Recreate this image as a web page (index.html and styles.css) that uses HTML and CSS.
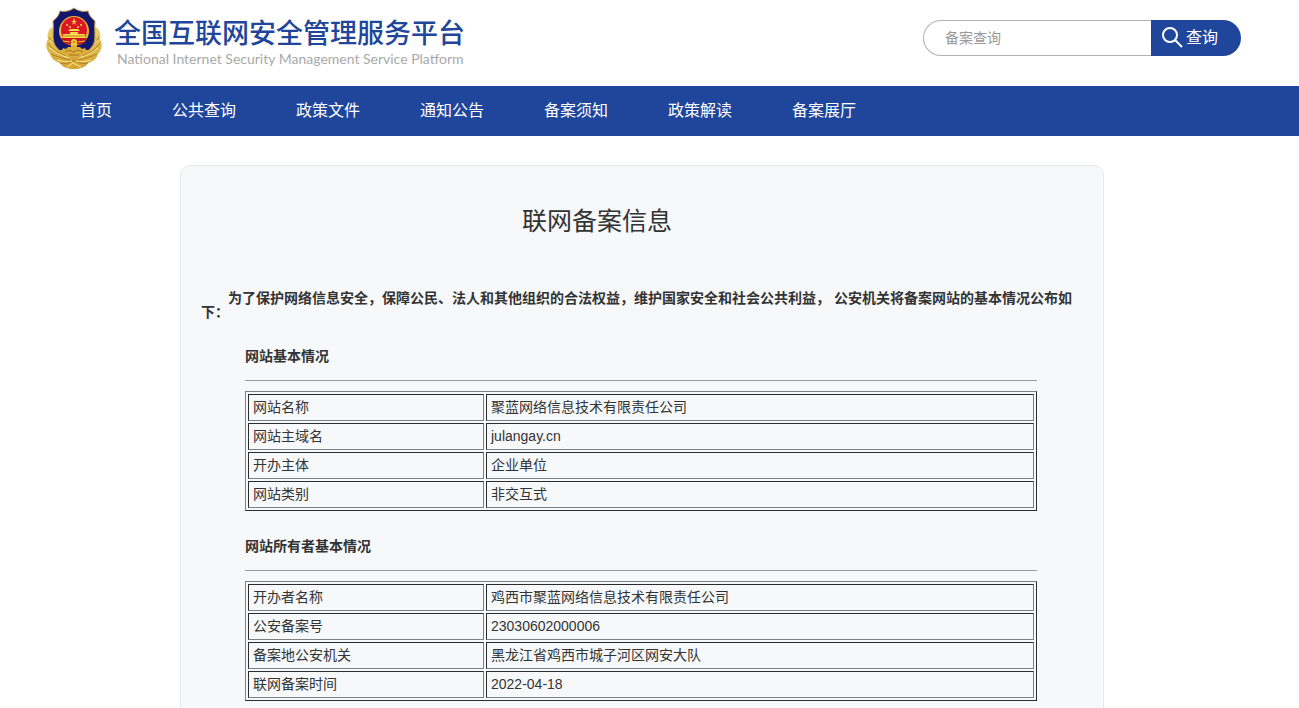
FILE: index.html
```html
<!DOCTYPE html>
<html lang="zh-CN">
<head>
<meta charset="utf-8">
<meta name="viewport" content="width=device-width, initial-scale=1">
<title>全国互联网安全管理服务平台</title>
<link rel="stylesheet" href="styles.css">
</head>
<body>
<header class="header">
  <div class="brand">
    <svg class="emblem" viewBox="0 0 58 63" aria-hidden="true">
      <defs>
        <linearGradient id="gold" x1="0" y1="0" x2="0" y2="1">
          <stop offset="0" stop-color="#ecd06a"/>
          <stop offset="1" stop-color="#d3a232"/>
        </linearGradient>
      </defs>
      <path d="M7 20C3 23 2 28 3 32C0 37 1 43 5 47C6 51 9 54 15 56C17 60 23 62 29 62C35 62 41 60 43 56C49 54 52 51 53 47C57 43 58 37 55 32C56 28 55 23 51 20L29 40Z" fill="url(#gold)"/>
      <path d="M4 30C7 35 10 40 17 44M3 36C7 42 13 46 20 49M6 47C12 50 18 51 25 53M15 56C20 57 24 56 29 53M54 30C51 35 48 40 41 44M55 36C51 42 45 46 38 49M52 47C46 50 40 51 33 53M43 56C38 57 34 56 29 53" fill="none" stroke="#b07d20" stroke-width="1"/>
      <path d="M5 33C10 39 14 43 21 47M5 41C11 46 17 49 24 51M53 33C48 39 44 43 37 47M53 41C47 46 41 49 34 51M12 53C18 55 22 55 27 54M46 53C40 55 36 55 31 54M22 60L28 56L36 60" fill="none" stroke="#fbe98b" stroke-width="1"/>
      <path d="M29 1C25 4 20 5 15 4C14 8 12 11 8 14C9 22 7 30 9 36C12 44 22 48 29 52C36 48 46 44 49 36C51 30 49 22 50 14C46 11 44 8 43 4C38 5 33 4 29 1Z" fill="#14166c" stroke="#b99a4c" stroke-width="1"/>
      <path d="M14 43L17 43L18 41L21 42L23 40H26V38H32V40H35L37 42L40 41L41 43L44 43L40 47L29 52L18 47Z" fill="#dcae3b"/>
      <path d="M20 45L24 43L28 45L33 43L38 45M24 48H34" fill="none" stroke="#a9741c" stroke-width="1"/>
      <circle cx="29" cy="24" r="15" fill="#e9b93c"/>
      <circle cx="29" cy="23" r="13" fill="#dc1622"/>
      <path d="M29 11L30 14H32L30 15L31 18L29 16L27 18L28 15L26 14H28Z" fill="#f8d84c"/>
      <g fill="#f8d84c">
        <circle cx="22" cy="18" r="1"/><circle cx="36" cy="18" r="1"/>
        <circle cx="25" cy="20" r="1"/><circle cx="33" cy="20" r="1"/>
        <path d="M23 24L25 22H33L35 24ZM25 25H33V27H40V31H18V27H25Z"/>
      </g>
      <path d="M18 29H40" stroke="#c4831c" stroke-width="1"/>
      <path d="M16 31H42L39 36L33 38L31 35H27L25 38L19 36Z" fill="#c8141c"/>
      <path d="M18 34L25 35M33 35L40 34" stroke="#f0c744" stroke-width="1"/>
      <circle cx="29" cy="35" r="3" fill="#f0c744"/>
      <circle cx="29" cy="35" r="1" fill="#b37918"/>
    </svg>
    <div class="brand-text">
      <div class="brand-name">全国互联网安全管理服务平台</div>
      <div class="brand-sub">National Internet Security Management Service Platform</div>
    </div>
  </div>
  <form class="search">
    <input class="search-input" type="text" placeholder="备案查询" aria-label="备案查询">
    <button class="search-button" type="button">
      <svg class="search-icon" viewBox="0 0 22 22" aria-hidden="true"><circle cx="8" cy="8" r="7"/><path d="M13 13L20 20"/></svg>
      查询
    </button>
  </form>
</header>
<nav class="nav">
  <a href="#">首页</a>
  <a href="#">公共查询</a>
  <a href="#">政策文件</a>
  <a href="#">通知公告</a>
  <a href="#">备案须知</a>
  <a href="#">政策解读</a>
  <a href="#">备案展厅</a>
</nav>
<main class="card">
  <h1 class="title">联网备案信息</h1>
  <p class="intro">为了保护网络信息安全，保障公民、法人和其他组织的合法权益，维护国家安全和社会公共利益， 公安机关将备案网站的基本情况公布如下：</p>
  <section class="block">
    <h2 class="block-title" id="site">网站基本情况</h2>
    <table class="info" aria-labelledby="site">
      <tr><th scope="row">网站名称</th><td>聚蓝网络信息技术有限责任公司</td></tr>
      <tr><th scope="row">网站主域名</th><td>julangay.cn</td></tr>
      <tr><th scope="row">开办主体</th><td>企业单位</td></tr>
      <tr><th scope="row">网站类别</th><td>非交互式</td></tr>
    </table>
  </section>
  <section class="block">
    <h2 class="block-title" id="owner">网站所有者基本情况</h2>
    <table class="info" aria-labelledby="owner">
      <tr><th scope="row">开办者名称</th><td>鸡西市聚蓝网络信息技术有限责任公司</td></tr>
      <tr><th scope="row">公安备案号</th><td>23030602000006</td></tr>
      <tr><th scope="row">备案地公安机关</th><td>黑龙江省鸡西市城子河区网安大队</td></tr>
      <tr><th scope="row">联网备案时间</th><td>2022-04-18</td></tr>
    </table>
  </section>
</main>
</body>
</html>
```
FILE: styles.css
```css
* { box-sizing: border-box; }
html { overflow-y: hidden; }
body {
  margin: 0;
  background: #fff;
  color: #333;
  font: 14px/14px "Liberation Sans", "Noto Sans CJK SC", sans-serif;
}
.header {
  display: flex;
  justify-content: space-between;
  align-items: flex-start;
  height: 86px;
  padding: 0 58px 0 45px;
}
.brand { display: flex; gap: 11px; padding-top: 7px; }
.emblem { width: 58px; height: 63px; }
.brand-text { padding-top: 7px; white-space: nowrap; }
.brand-name {
  color: #1f469b;
  font-size: 27px;
  font-weight: 500;
  line-height: 35px;
  font-family: "Noto Sans CJK SC", sans-serif;
}
.brand-sub {
  padding-left: 3px;
  color: #a9a9a9;
  font: 14px/20px Lato, sans-serif;
}
.search { display: flex; width: 318px; height: 36px; margin-top: 20px; }
.search-input {
  flex: 1;
  min-width: 0;
  padding: 0 21px;
  border: 1px solid #b2b2b2;
  border-right: 0;
  border-radius: 18px 0 0 18px;
  background: #fff;
  font: inherit;
}
.search-input::placeholder { color: #999; }
.search-button {
  display: flex;
  align-items: center;
  gap: 2px;
  width: 90px;
  padding: 0 0 0 11px;
  border: 0;
  border-radius: 0 18px 18px 0;
  background: #1f469b;
  color: #fff;
  font: 16px/20px "Liberation Sans", "Noto Sans CJK SC", sans-serif;
}
.search-icon { width: 22px; height: 22px; fill: none; stroke: #fff; stroke-width: 2; }
.nav {
  display: flex;
  gap: 60px;
  height: 50px;
  padding: 0 80px;
  background: #1f469b;
}
.nav a {
  color: #fff;
  font-size: 16px;
  line-height: 50px;
  text-decoration: none;
  white-space: nowrap;
}
.card {
  margin: 29px 195px 0 180px;
  padding: 37px 20px 40px;
  border: 1px solid #e8e9eb;
  border-radius: 10px;
  background: #f6f8fa;
}
.title {
  margin: 0 90px 52px 0;
  font-size: 25px;
  font-weight: 400;
  line-height: 36px;
  text-align: center;
}
.intro {
  margin: 0 0 2px;
  font-weight: 700;
  text-indent: 27px;
}
.block { margin: 0 46px 0 44px; padding-top: 28px; }
.block-title {
  margin: 0 0 10px;
  padding-bottom: 17px;
  border-bottom: 1px solid #999;
  font-size: 14px;
  line-height: 14px;
}
.info {
  width: 100%;
  table-layout: fixed;
  border: 1px solid;
  border-color: #808080 #2c2c2c #2c2c2c #808080;
  border-collapse: separate;
  border-spacing: 2px;
}
.info th, .info td {
  height: 27px;
  padding: 0 4px 2px;
  border: 1px solid;
  border-color: #2c2c2c #808080 #808080 #2c2c2c;
  line-height: 22px;
  font-weight: 400;
  text-align: left;
}
.info th { width: 236px; }
```
